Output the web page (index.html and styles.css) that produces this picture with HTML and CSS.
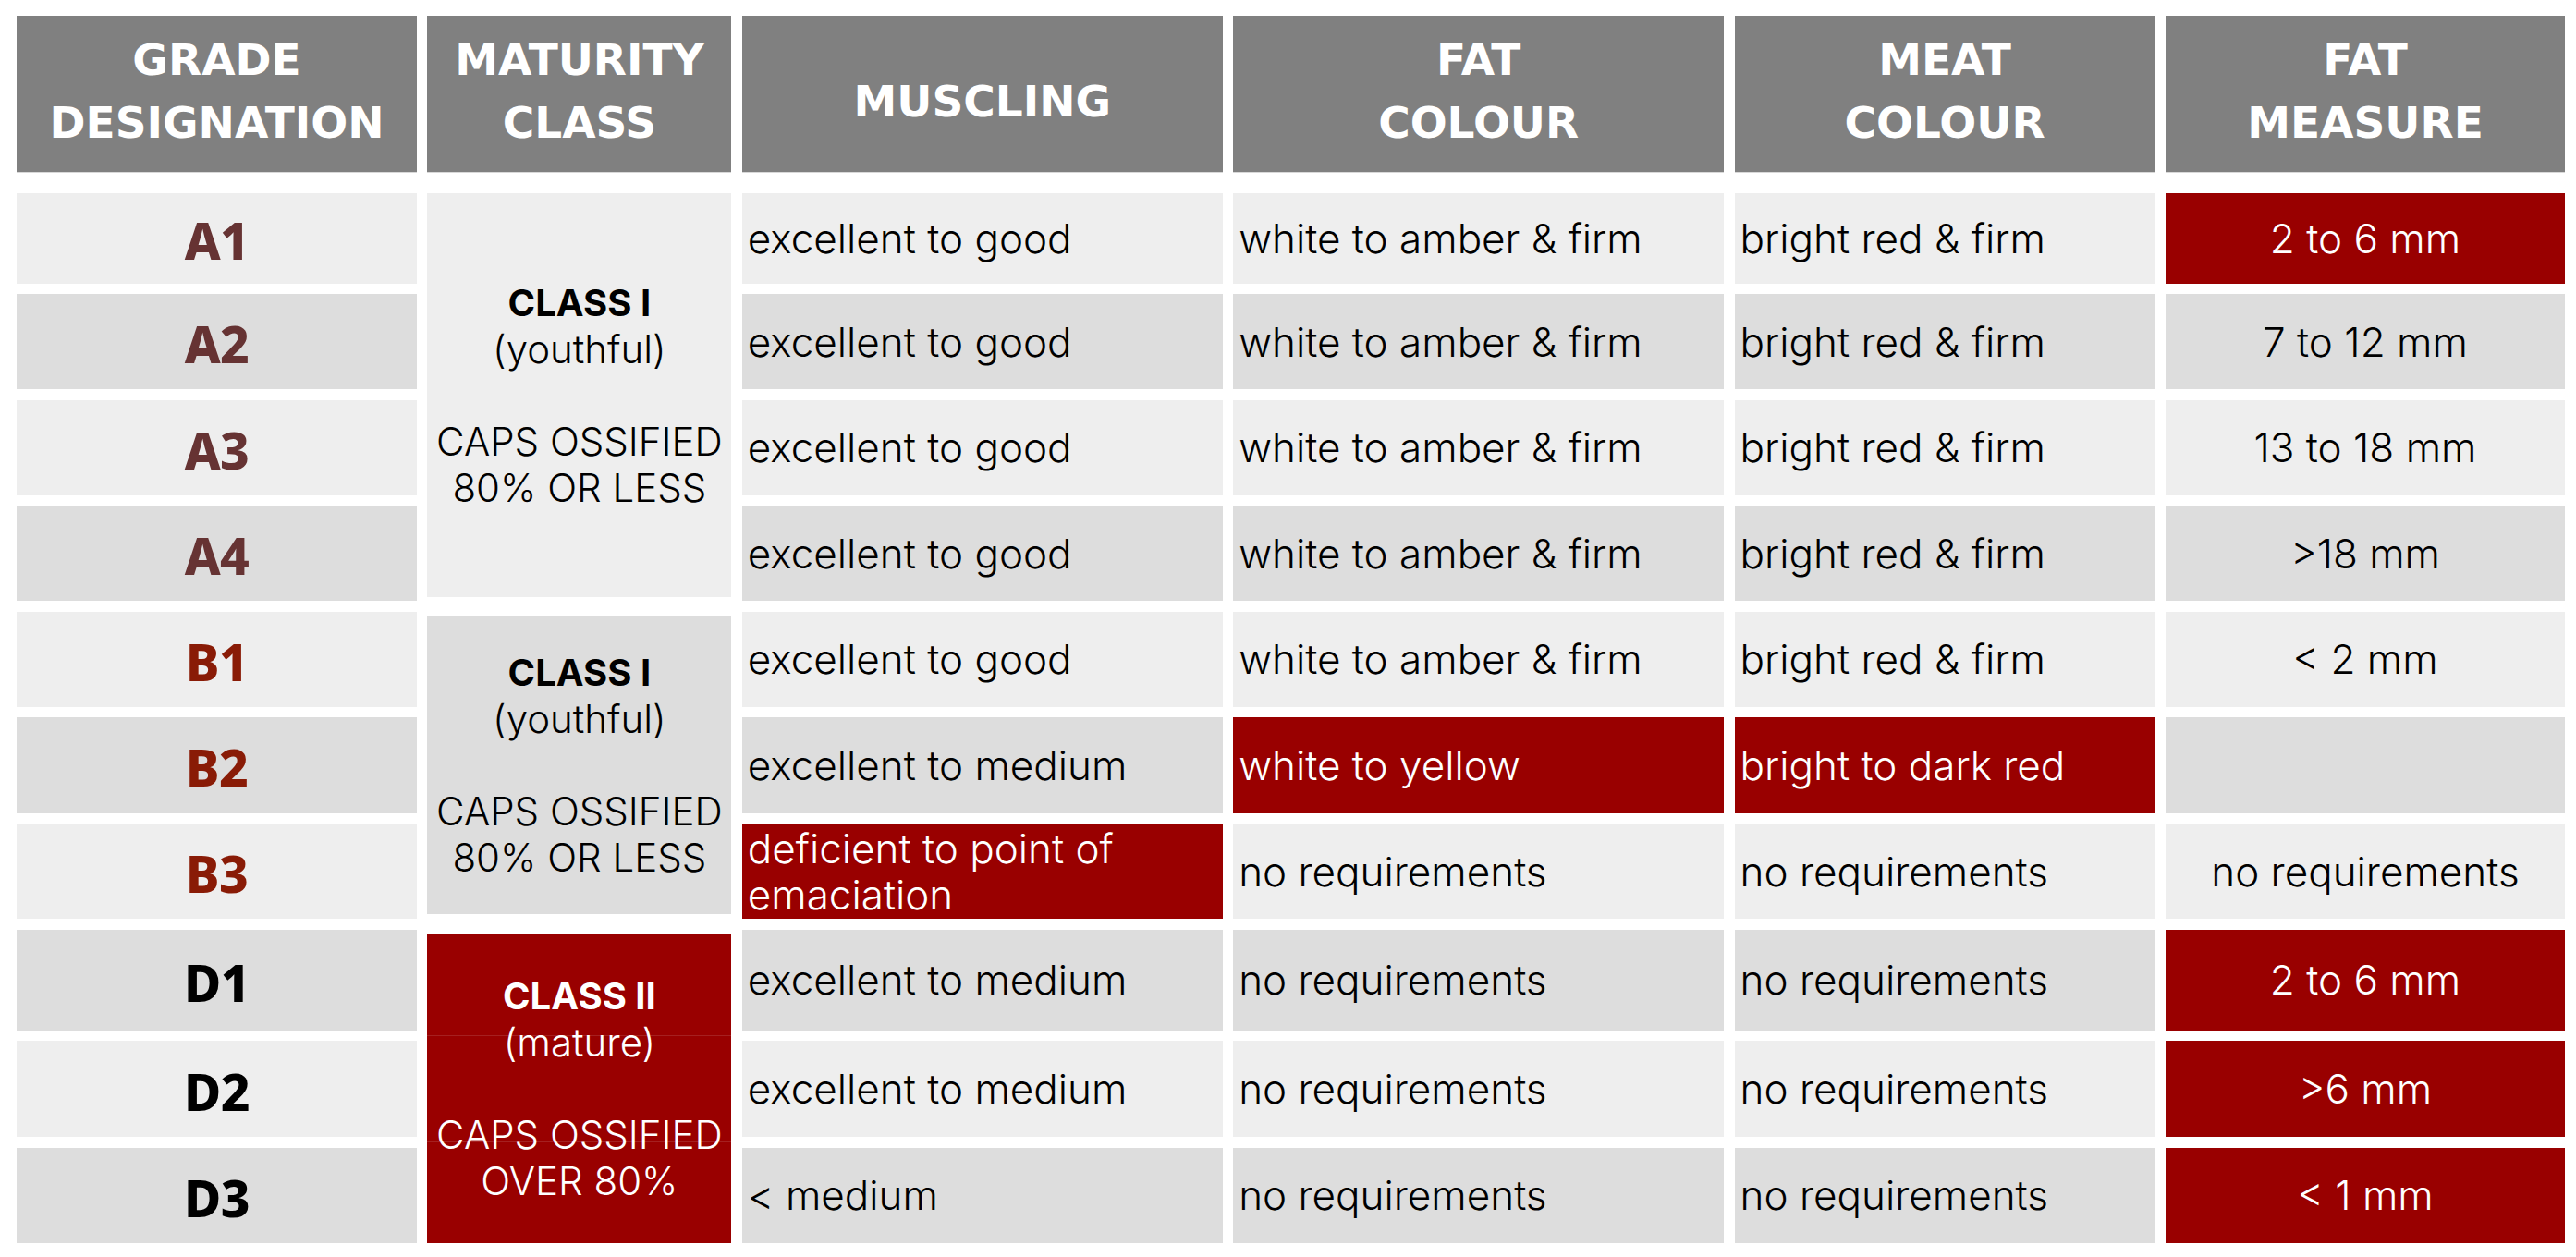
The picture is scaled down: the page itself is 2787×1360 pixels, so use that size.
FILE: index.html
```html
<!DOCTYPE html>
<html lang="en">
<head>
<meta charset="utf-8">
<title>Beef carcass grades</title>
<link rel="stylesheet" href="styles.css">
</head>
<body>
<div class="grades">
  <div class="hd">GRADE<br>DESIGNATION</div>
  <div class="hd">MATURITY<br>CLASS</div>
  <div class="hd one">MUSCLING</div>
  <div class="hd">FAT<br>COLOUR</div>
  <div class="hd">MEAT<br>COLOUR</div>
  <div class="hd">FAT<br>MEASURE</div>

  <!-- A1 -->
  <div class="grade ga light">A1</div>
  <div class="mat mat-a light">
    <b>CLASS I</b><span>(youthful)</span><span>&nbsp;</span><span>CAPS OSSIFIED</span><span>80% OR LESS</span>
  </div>
  <div class="td light">excellent to good</div>
  <div class="td light">white to amber &amp; firm</div>
  <div class="td light">bright red &amp; firm</div>
  <div class="td ctr red">2 to 6 mm</div>

  <!-- A2 -->
  <div class="grade ga dark">A2</div>
  <div class="td dark">excellent to good</div>
  <div class="td dark">white to amber &amp; firm</div>
  <div class="td dark">bright red &amp; firm</div>
  <div class="td ctr dark">7 to 12 mm</div>

  <!-- A3 -->
  <div class="grade ga light">A3</div>
  <div class="td light">excellent to good</div>
  <div class="td light">white to amber &amp; firm</div>
  <div class="td light">bright red &amp; firm</div>
  <div class="td ctr light">13 to 18 mm</div>

  <!-- A4 -->
  <div class="grade ga dark">A4</div>
  <div class="td dark">excellent to good</div>
  <div class="td dark">white to amber &amp; firm</div>
  <div class="td dark">bright red &amp; firm</div>
  <div class="td ctr dark">&gt;18 mm</div>

  <!-- B1 -->
  <div class="grade gb light">B1</div>
  <div class="mat mat-b dark">
    <b>CLASS I</b><span>(youthful)</span><span>&nbsp;</span><span>CAPS OSSIFIED</span><span>80% OR LESS</span>
  </div>
  <div class="td light">excellent to good</div>
  <div class="td light">white to amber &amp; firm</div>
  <div class="td light">bright red &amp; firm</div>
  <div class="td ctr light">&lt; 2 mm</div>

  <!-- B2 -->
  <div class="grade gb dark">B2</div>
  <div class="td dark">excellent to medium</div>
  <div class="td red">white to yellow</div>
  <div class="td red">bright to dark red</div>
  <div class="td ctr dark"></div>

  <!-- B3 -->
  <div class="grade gb light">B3</div>
  <div class="td red wrap">deficient to point of emaciation</div>
  <div class="td light">no requirements</div>
  <div class="td light">no requirements</div>
  <div class="td ctr light">no requirements</div>

  <!-- D1 -->
  <div class="grade gd dark">D1</div>
  <div class="mat mat-d red">
    <b>CLASS II</b><span>(mature)</span><span>&nbsp;</span><span>CAPS OSSIFIED</span><span>OVER 80%</span>
  </div>
  <div class="td dark">excellent to medium</div>
  <div class="td dark">no requirements</div>
  <div class="td dark">no requirements</div>
  <div class="td ctr red">2 to 6 mm</div>

  <!-- D2 -->
  <div class="grade gd light">D2</div>
  <div class="td light">excellent to medium</div>
  <div class="td light">no requirements</div>
  <div class="td light">no requirements</div>
  <div class="td ctr red">&gt;6 mm</div>

  <!-- D3 -->
  <div class="grade gd dark">D3</div>
  <div class="td dark">&lt; medium</div>
  <div class="td dark">no requirements</div>
  <div class="td dark">no requirements</div>
  <div class="td ctr red">&lt; 1 mm</div>
</div>
</body>
</html>
```
FILE: styles.css
```css
html, body {
  margin: 0;
  background: #ffffff;
}
body {
  padding: 17px 0 0 18px;
  font-family: "Inter", "Liberation Sans", sans-serif;
}
.grades {
  display: grid;
  grid-template-columns: 433px 329px 520px 531px 455px 432px;
  grid-template-rows: 180.6px 98px 103px 103px 103px 103px 104px 103px 109px 104px 103px;
  column-gap: 11.4px;
  row-gap: 11.4px;
}
.hd {
  background: #808080;
  color: #ffffff;
  font-family: "DejaVu Sans", "Liberation Sans", sans-serif;
  font-weight: 700;
  font-size: 47px;
  line-height: 68px;
  text-align: center;
  display: flex;
  align-items: center;
  justify-content: center;
  margin-bottom: 10.6px;
  padding-bottom: 6px;
  box-sizing: border-box;
  box-shadow: inset 0 -1px 0 #d8d8d8;
}
.hd.one { padding-top: 22px; }
.light { background: #eeeeee; }
.dark { background: #dddddd; }
.red { background: #990000; color: #ffffff; }

.grade {
  font-family: "Noto Sans", "Inter", sans-serif;
  font-weight: 800;
  font-size: 55px;
  display: flex;
  align-items: center;
  justify-content: center;
  letter-spacing: -0.5px;
  padding-top: 4px;
}
.ga { color: #663333; }
.gb { color: #891b06; }
.gd { color: #000000; }

.td {
  display: flex;
  align-items: center;
  padding: 0 6px;
  font-weight: 300;
  font-size: 44px;
  color: #000000;
}
.td.red { color: #ffffff; }
.td.ctr { justify-content: center; }
.td.wrap { line-height: 50px; padding-top: 1px; }

.mat {
  display: flex;
  flex-direction: column;
  align-items: center;
  justify-content: center;
  text-align: center;
  font-weight: 300;
  font-size: 42px;
  line-height: 50px;
  color: #000000;
}
.mat b {
  font-weight: 700;
  font-size: 40px;
}
.mat-a { grid-column: 2; grid-row: 2 / span 4; margin-bottom: 4px; }
.mat-b { grid-column: 2; grid-row: 6 / span 3; margin: 5px 0; }
.mat-d {
  grid-column: 2;
  grid-row: 9 / span 3;
  margin-top: 5px;
  color: #ffffff;
  background:
    linear-gradient(#a52020, #a52020) 0 109px / 100% 1px no-repeat,
    linear-gradient(#a52020, #a52020) 0 224px / 100% 1px no-repeat,
    #990000;
}
```
